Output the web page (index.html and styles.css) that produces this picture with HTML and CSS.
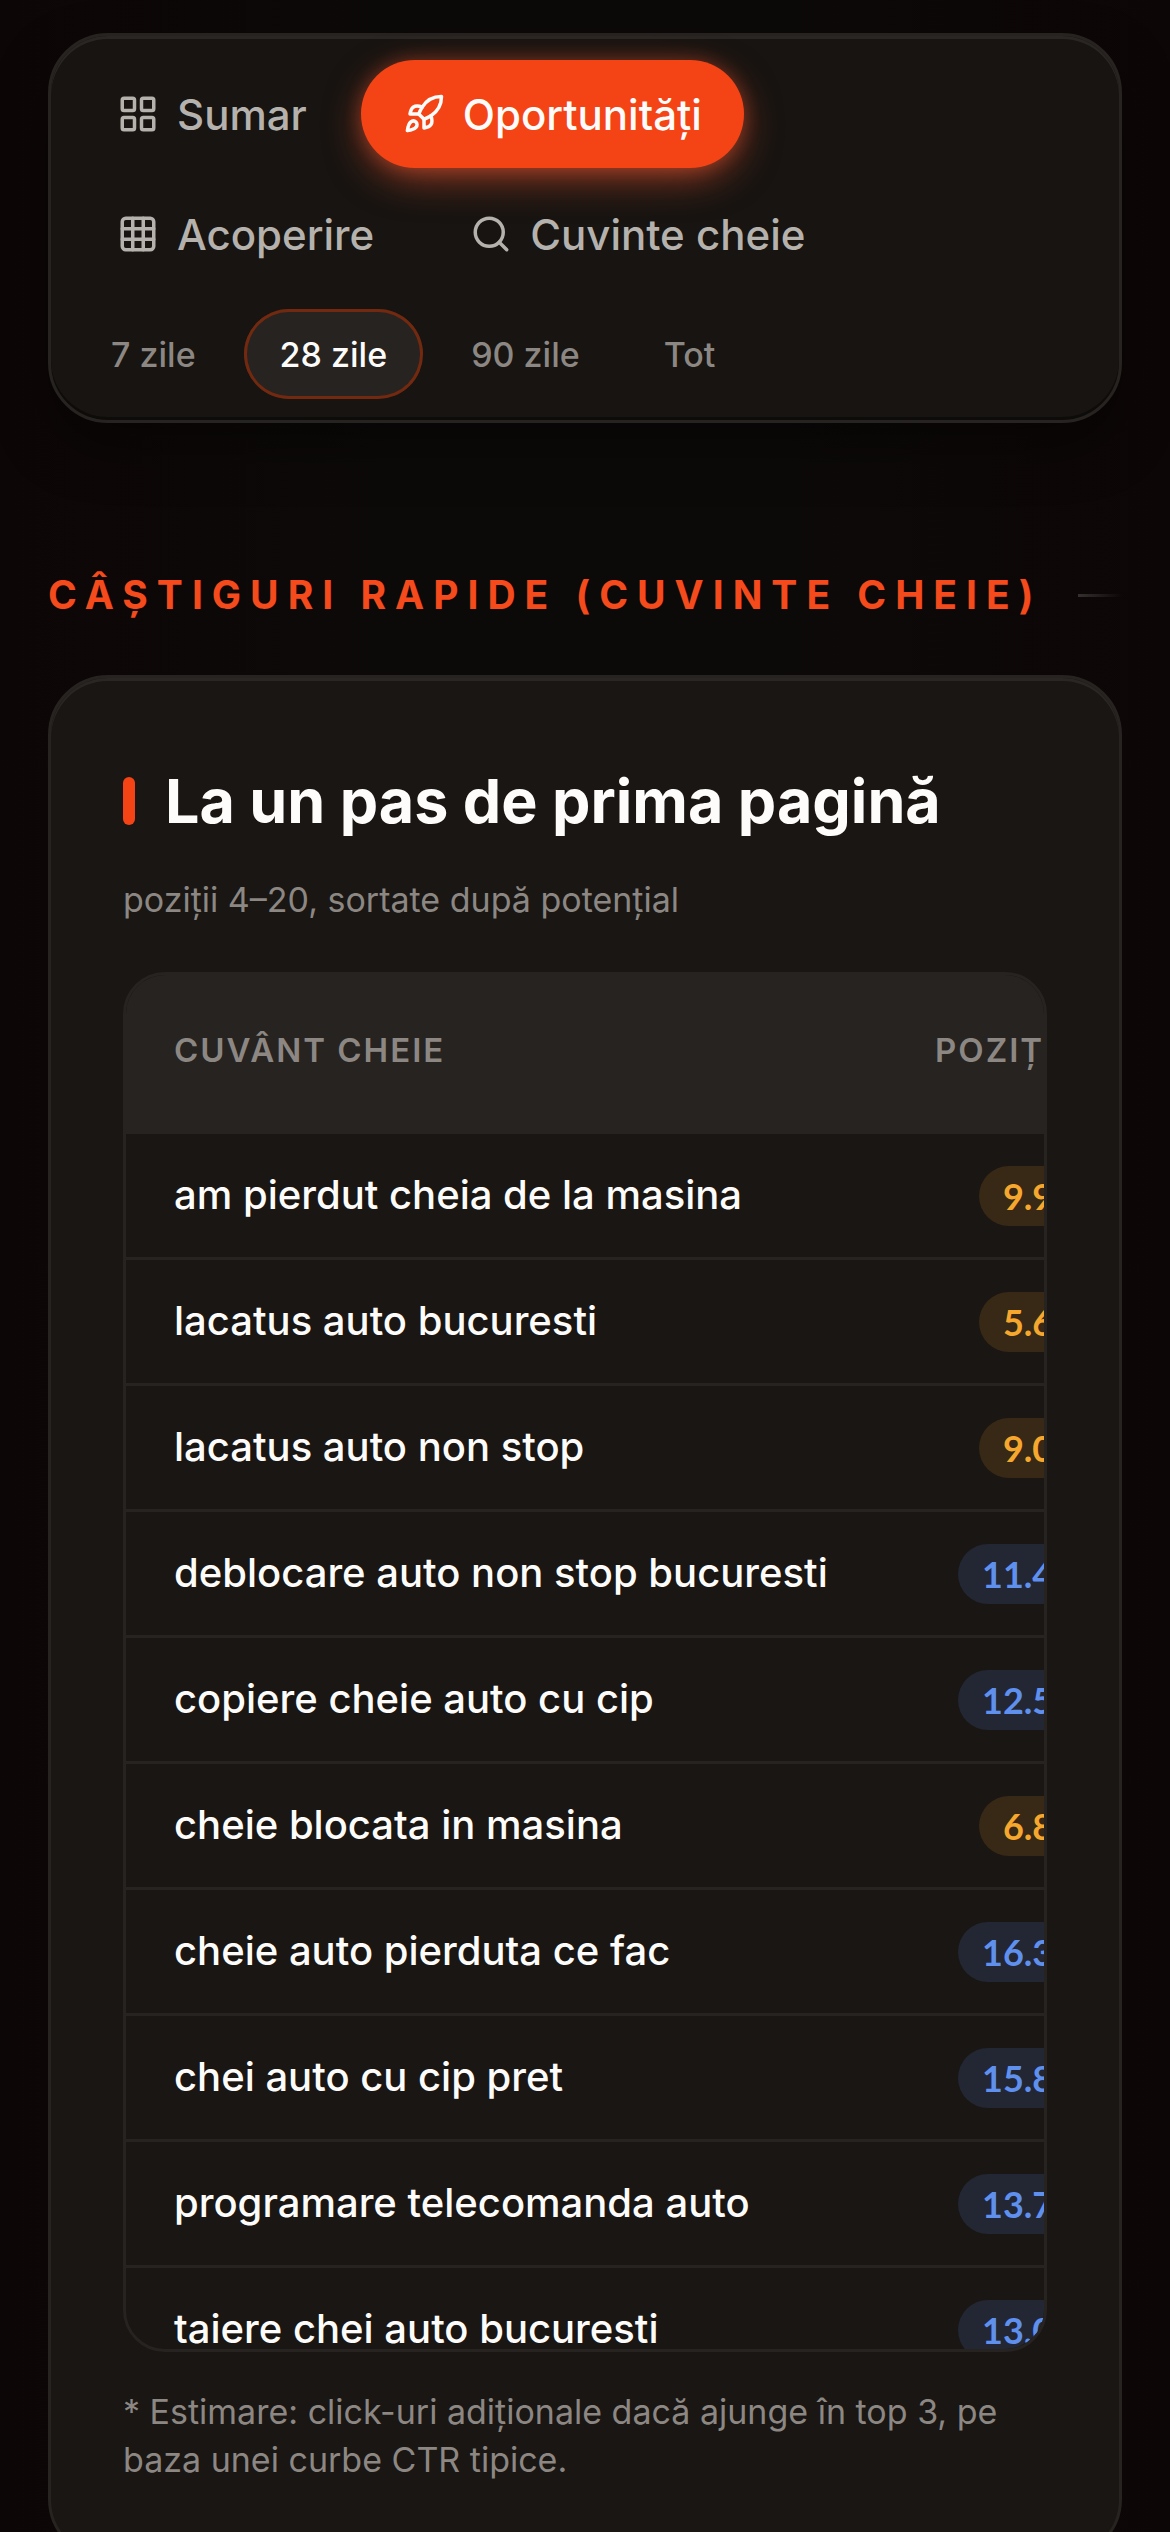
FILE: index.html
```html
<!DOCTYPE html>
<html lang="ro">

<head>
    <meta charset="UTF-8">
    <meta name="viewport" content="width=device-width, initial-scale=1.0">
    <title>Oportunități</title>
    <link rel="stylesheet" href="styles.css">
</head>

<body>

    <main class="page">
        <nav class="card toolbar">
            <div class="tabs">
                <button type="button" class="tab">
                    <svg class="icon" viewBox="0 0 24 24"><rect x="3" y="3" width="7" height="7" rx="1"/><rect x="14" y="3" width="7" height="7" rx="1"/><rect x="3" y="14" width="7" height="7" rx="1"/><rect x="14" y="14" width="7" height="7" rx="1"/></svg>
                    Sumar
                </button>
                <button type="button" class="tab active">
                    <svg class="icon" viewBox="0 0 24 24"><path d="M4.5 16.5c-1.5 1.26-2 5-2 5s3.74-.5 5-2c.71-.84.7-2.13-.09-2.91a2.18 2.18 0 0 0-2.91-.09z"/><path d="m12 15-3-3a22 22 0 0 1 2-3.95A12.88 12.88 0 0 1 22 2c0 2.72-.78 7.5-6 11a22.35 22.35 0 0 1-4 2z"/><path d="M9 12H4s.55-3.03 2-4c1.62-1.08 5 0 5 0"/><path d="M12 15v5s3.03-.55 4-2c1.08-1.62 0-5 0-5"/></svg>
                    Oportunități
                </button>
                <button type="button" class="tab">
                    <svg class="icon" viewBox="0 0 24 24"><rect x="3" y="3" width="18" height="18" rx="2"/><path d="M3 9h18M3 15h18M9 3v18M15 3v18"/></svg>
                    Acoperire
                </button>
                <button type="button" class="tab">
                    <svg class="icon" viewBox="0 0 24 24"><circle cx="11" cy="11" r="8"/><path d="m21 21-4.3-4.3"/></svg>
                    Cuvinte cheie
                </button>
            </div>
            <div class="periods">
                <button type="button" class="period">7 zile</button>
                <button type="button" class="period active">28 zile</button>
                <button type="button" class="period">90 zile</button>
                <button type="button" class="period">Tot</button>
            </div>
        </nav>

        <h2 class="section-title">CÂȘTIGURI RAPIDE (CUVINTE CHEIE)</h2>

        <section class="card panel">
            <h3 class="panel-title">La un pas de prima pagină</h3>
            <p class="panel-sub">poziții 4–20, sortate după potențial</p>

            <!-- scrolls both ways -->
            <div class="table-wrap">
                <table>
                    <thead>
                        <tr>
                            <th>CUVÂNT CHEIE</th>
                            <th class="num">POZIȚIE</th>
                        </tr>
                    </thead>
                    <tbody>
                        <tr>
                            <td>am pierdut cheia de la masina</td>
                            <td class="num"><span class="badge amber">9.9</span></td>
                        </tr>
                        <tr>
                            <td>lacatus auto bucuresti</td>
                            <td class="num"><span class="badge amber">5.6</span></td>
                        </tr>
                        <tr>
                            <td>lacatus auto non stop</td>
                            <td class="num"><span class="badge amber">9.0</span></td>
                        </tr>
                        <tr>
                            <td>deblocare auto non stop bucuresti</td>
                            <td class="num"><span class="badge blue">11.4</span></td>
                        </tr>
                        <tr>
                            <td>copiere cheie auto cu cip</td>
                            <td class="num"><span class="badge blue">12.5</span></td>
                        </tr>
                        <tr>
                            <td>cheie blocata in masina</td>
                            <td class="num"><span class="badge amber">6.8</span></td>
                        </tr>
                        <tr>
                            <td>cheie auto pierduta ce fac</td>
                            <td class="num"><span class="badge blue">16.3</span></td>
                        </tr>
                        <tr>
                            <td>chei auto cu cip pret</td>
                            <td class="num"><span class="badge blue">15.8</span></td>
                        </tr>
                        <tr>
                            <td>programare telecomanda auto</td>
                            <td class="num"><span class="badge blue">13.7</span></td>
                        </tr>
                        <tr>
                            <td>taiere chei auto bucuresti</td>
                            <td class="num"><span class="badge blue">13.0</span></td>
                        </tr>
                    </tbody>
                </table>
            </div>

            <p class="note">* Estimare: click-uri adiționale dacă ajunge în top 3, pe baza unei curbe CTR tipice.</p>
        </section>
    </main>

</body>

</html>
```
FILE: styles.css
```css
*{
    padding: 0;
    margin: 0;
    box-sizing: border-box;
}
body{
    background: linear-gradient(90deg, #0d0606 0%, #0c0a09 35%, #0c0a09 65%, #0d0606 100%);
    color: #fefcfa;
    font-family: Inter, "Liberation Sans", sans-serif;
    font-size: 40px;
}
button{
    border: none;
    background: none;
    font-family: inherit;
    font-weight: 500;
    cursor: pointer;
}
.page{
    padding: 33px 48px;
}
.card{
    background-color: #191613;
    border: 3px solid #262320;
    border-radius: 60px;
    box-shadow: inset 0 3px 0 #292623;
}

/* toolbar */
.toolbar{
    display: flex;
    flex-direction: column;
    gap: 21px;
    padding: 24px 24px 21px;
    background-color: #171411;
    box-shadow: inset 0 3px 0 #292623, inset 0 -3px 0 #0e0c0a, 0 24px 60px -12px rgba(0,0,0,.5);
}
.tabs{
    display: flex;
    flex-wrap: wrap;
    gap: 12px;
}
.tab{
    display: flex;
    align-items: center;
    gap: 18px;
    height: 108px;
    padding: 0 42px;
    border-radius: 54px;
    color: #b5b1ad;
    font-size: 42px;
}
.tab.active{
    background-color: #f44416;
    color: #fefcfa;
    box-shadow: 0 12px 42px -6px rgba(255,90,50,.65), 0 0 18px rgba(255,90,50,.3);
}
.icon{
    width: 42px;
    height: 42px;
    fill: none;
    stroke: currentColor;
    stroke-width: 2;
    stroke-linecap: round;
    stroke-linejoin: round;
}
.periods{
    display: flex;
    gap: 12px;
}
.period{
    height: 90px;
    padding: 0 36px;
    border-radius: 45px;
    color: #8c8783;
    font-size: 34px;
}
.period.active{
    background-color: #262320;
    color: #fefcfa;
    box-shadow: inset 0 0 0 3px #72290f;
}

/* section heading with fading line */
.section-title{
    display: flex;
    align-items: center;
    gap: 36px;
    margin: 142px 0 50px;
    color: #f44a1c;
    font-size: 39px;
    line-height: 60px;
    letter-spacing: 9px;
    white-space: nowrap;
}
.section-title::after{
    content: "";
    flex: 1;
    height: 3px;
    background: linear-gradient(90deg, #34312e, transparent);
}

/* panel */
.panel{
    padding: 72px;
}
.panel-title{
    display: flex;
    align-items: center;
    gap: 30px;
    font-size: 61px;
    line-height: 102px;
}
.panel-title::before{
    content: "";
    width: 12px;
    height: 48px;
    border-radius: 6px;
    background-color: #f44416;
}
.panel-sub{
    margin: 21px 0 45px;
    color: #8c8783;
    font-size: 34px;
    line-height: 54px;
}
.table-wrap{
    max-height: 1380px;
    overflow: auto;
    scrollbar-width: none;
    border: 3px solid #262320;
    border-radius: 42px;
}
table{
    width: 100%;
    border-spacing: 0;
    white-space: nowrap;
}
th{
    padding: 48px 48px 57px;
    background-color: #262320;
    color: #8c8783;
    font-size: 33px;
    font-weight: 600;
    line-height: 54px;
    letter-spacing: 2px;
    text-align: left;
}
td{
    height: 126px;
    padding: 0 48px 3px;
    border-bottom: 3px solid #262320;
    font-weight: 500;
}
th:first-child{
    min-width: 761px;
}
.num{
    text-align: right;
}
td.num{
    padding-bottom: 0;
}
.badge{
    display: inline-block;
    padding: 0 24px;
    border-radius: 30px;
    font-family: Lato, Inter, sans-serif;
    font-size: 36px;
    font-weight: 700;
    line-height: 60px;
    vertical-align: middle;
}
.amber{
    background-color: #382916;
    color: #f6a82e;
}
.blue{
    background-color: #222733;
    color: #6090ee;
}
.note{
    margin-top: 36px;
    color: #8c8783;
    font-size: 34px;
    line-height: 48px;
}
```
